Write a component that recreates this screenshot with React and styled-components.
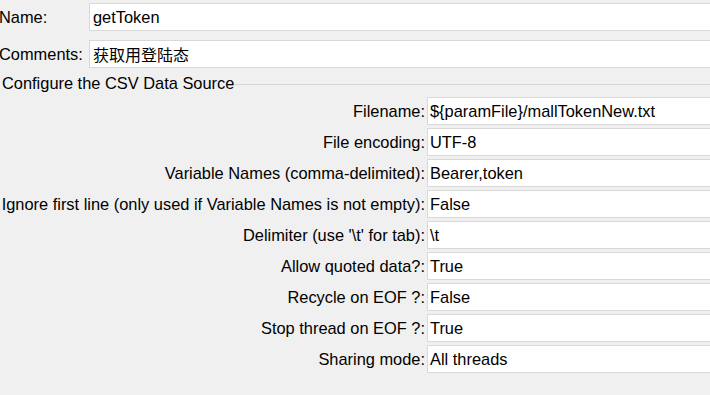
import React from 'react'
import styled, { createGlobalStyle } from 'styled-components'

const GlobalStyle = createGlobalStyle`
  html, body {
    margin: 0;
    padding: 0;
    background: #f0f0f0;
    overflow: hidden;
  }
  body {
    font-family: "Liberation Sans", Arial, "Noto Sans CJK SC", sans-serif;
    font-size: 16.4px;
    color: #000;
  }
`

const Page = styled.div`
  width: 716px;
  height: 395px;
  background: #f0f0f0;
  padding-top: 3px;
  box-sizing: border-box;
`

const TopRow = styled.div`
  display: grid;
  grid-template-columns: 89px 1fr;
  align-items: center;
  margin-bottom: ${props => props.gap || 0}px;
`

const TopLabel = styled.span`
  margin-left: -1px;
  white-space: nowrap;
`

const Field = styled.div`
  height: 28px;
  box-sizing: border-box;
  background: #fff;
  border: 1px solid #d9d9d9;
  display: flex;
  align-items: center;
  padding-left: ${props => props.pad || 2}px;
  white-space: nowrap;
  font-family: ${props => props.cjk
    ? '"Noto Sans CJK SC", "Liberation Sans", sans-serif'
    : '"Liberation Sans", Arial, sans-serif'};
  font-size: ${props => props.cjk ? '16px' : 'inherit'};
`

const Panel = styled.div`
  margin-top: 5px;
`

const Legend = styled.div`
  display: flex;
  align-items: center;
  height: 20px;
  padding-left: 2px;
  margin-bottom: 4px;
`

const LegendText = styled.span`
  white-space: nowrap;
  margin-right: 1px;
`

const Rule = styled.div`
  flex: 1;
  height: 1px;
  background: #d5d5d5;
  margin-top: 2px;
`

const Form = styled.div`
  display: grid;
  grid-template-columns: 425px 1fr;
  column-gap: 2px;
  row-gap: 3px;
  align-items: center;
`

const Label = styled.span`
  text-align: right;
  white-space: nowrap;
`

const rows = [
  ['Filename:', '${paramFile}/mallTokenNew.txt'],
  ['File encoding:', 'UTF-8'],
  ['Variable Names (comma-delimited):', 'Bearer,token'],
  ['Ignore first line (only used if Variable Names is not empty):', 'False'],
  ["Delimiter (use '\\t' for tab):", '\\t'],
  ['Allow quoted data?:', 'True'],
  ['Recycle on EOF ?:', 'False'],
  ['Stop thread on EOF ?:', 'True'],
  ['Sharing mode:', 'All threads'],
]

export default function App () {
  return (
    <Page>
      <GlobalStyle />
      <TopRow gap={9}>
        <TopLabel>Name:</TopLabel>
        <Field pad={3}>getToken</Field>
      </TopRow>
      <TopRow>
        <TopLabel>Comments:</TopLabel>
        <Field pad={3} cjk>获取用登陆态</Field>
      </TopRow>
      <Panel>
        <Legend>
          <LegendText>Configure the CSV Data Source</LegendText>
          <Rule />
        </Legend>
        <Form>
          {rows.map(([label, value]) => (
            <React.Fragment key={label}>
              <Label>{label}</Label>
              <Field>{value}</Field>
            </React.Fragment>
          ))}
        </Form>
      </Panel>
    </Page>
  )
}
